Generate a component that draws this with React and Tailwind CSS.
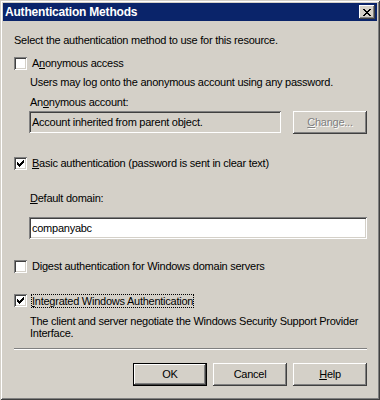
import React from "react";

const raised =
  "shadow-[inset_-1px_-1px_0_#404040,inset_1px_1px_0_#ffffff,inset_-2px_-2px_0_#808080,inset_2px_2px_0_#d4d0c8]";
const sunken =
  "shadow-[inset_1px_1px_0_#808080,inset_-1px_-1px_0_#ffffff,inset_2px_2px_0_#404040,inset_-2px_-2px_0_#d4d0c8]";

function CheckMark() {
  return (
    <svg width="7" height="7" viewBox="0 0 7 7" shapeRendering="crispEdges" className="block">
      <rect x="6" y="0" width="1" height="1" fill="#000" />
      <rect x="5" y="1" width="2" height="1" fill="#000" />
      <rect x="0" y="2" width="1" height="1" fill="#000" />
      <rect x="4" y="2" width="3" height="1" fill="#000" />
      <rect x="0" y="3" width="2" height="1" fill="#000" />
      <rect x="3" y="3" width="3" height="1" fill="#000" />
      <rect x="0" y="4" width="5" height="1" fill="#000" />
      <rect x="1" y="5" width="3" height="1" fill="#000" />
      <rect x="2" y="6" width="1" height="1" fill="#000" />
    </svg>
  );
}

function CloseGlyph() {
  const rows = [
    [[0, 2], [6, 2]],
    [[1, 2], [5, 2]],
    [[2, 4]],
    [[3, 2]],
    [[2, 4]],
    [[1, 2], [5, 2]],
    [[0, 2], [6, 2]],
  ];
  return (
    <svg width="8" height="7" viewBox="0 0 8 7" shapeRendering="crispEdges" className="block">
      {rows.map((r, y) =>
        r.map(([x, w], i) => <rect key={y + "-" + i} x={x} y={y} width={w} height="1" fill="#000" />)
      )}
    </svg>
  );
}

function Checkbox({ checked }) {
  return (
    <div className={`w-[13px] h-[13px] bg-white shrink-0 flex items-center justify-center ${sunken}`}>
      {checked ? <CheckMark /> : null}
    </div>
  );
}

function Button({ children, def, disabled, className = "" }) {
  const shadow = def
    ? "shadow-[inset_0_0_0_1px_#000000,inset_-2px_-2px_0_#404040,inset_2px_2px_0_#ffffff,inset_-3px_-3px_0_#808080,inset_3px_3px_0_#d4d0c8]"
    : raised;
  return (
    <div
      className={`w-[74px] h-[23px] bg-[#d4d0c8] flex items-center justify-center leading-[13px] ${shadow} ${
        disabled ? "text-[#808080] [text-shadow:1px_1px_0_#ffffff]" : "text-black"
      } ${className}`}
    >
      {children}
    </div>
  );
}

export default function App() {
  return (
    <div
      className="w-[380px] h-[400px] bg-[#d4d0c8] p-[3px] flex flex-col shadow-[inset_1px_1px_0_#d4d0c8,inset_-1px_-1px_0_#404040,inset_2px_2px_0_#ffffff,inset_-2px_-2px_0_#808080] text-[11px] tracking-[-0.25px] text-black"
      style={{ fontFamily: '"Liberation Sans", Arial, sans-serif' }}
    >
      {/* Title bar */}
      <div className="h-[18px] bg-[#0a246a] flex items-center justify-between pl-[2px] pr-[2px] shrink-0">
        <span className="text-white font-bold text-[12px] tracking-[-0.2px] leading-[14px]">
          Authentication Methods
        </span>
        <div className={`w-[16px] h-[14px] bg-[#d4d0c8] flex items-center justify-center ${raised}`}>
          <div className="pl-[0px] pt-[0px]">
            <CloseGlyph />
          </div>
        </div>
      </div>

      {/* Body */}
      <div className="flex flex-col pt-[13px] pl-[11px] pr-[10px] leading-[13px]">
        <div>Select the authentication method to use for this resource.</div>

        <div className="mt-[10px] flex items-center gap-[5px] h-[13px]">
          <Checkbox />
          <span>
            A<u>n</u>onymous access
          </span>
        </div>

        <div className="mt-[6px] ml-[16px]">Users may log onto the anonymous account using any password.</div>
        <div className="mt-[7px] ml-[16px]">
          An<u>o</u>nymous account:
        </div>

        <div className="mt-[2px] ml-[15px] flex items-start justify-between">
          <div className={`w-[252px] h-[22px] bg-[#d4d0c8] flex items-center pl-[3px] ${sunken}`}>
            Account inherited from parent object.
          </div>
          <Button disabled>
            <span>
              <u>C</u>hange...
            </span>
          </Button>
        </div>

        <div className="mt-[23px] flex items-center gap-[5px] h-[13px]">
          <Checkbox checked />
          <span>
            <u>B</u>asic authentication (password is sent in clear text)
          </span>
        </div>

        <div className="mt-[22px] ml-[16px]">
          <u>D</u>efault domain:
        </div>

        <div className={`mt-[12px] ml-[15px] h-[22px] bg-white flex items-center pl-[3px] ${sunken}`}>
          companyabc
        </div>

        <div className="mt-[21px] flex items-center gap-[5px] h-[13px]">
          <Checkbox />
          <span>
            Di<u>g</u>est authentication for Windows domain servers
          </span>
        </div>

        <div className="mt-[21px] flex items-center gap-[4px] h-[13px]">
          <Checkbox checked />
          <span className="border border-dotted border-black px-[0px] leading-[12px]">
            <u>I</u>ntegrated Windows Authentication
          </span>
        </div>

        <div className="mt-[8px] ml-[16px] leading-[12px]">
          The client and server negotiate the Windows Security Support Provider
          <br />
          Interface.
        </div>

        <div className="mt-[9px] h-[2px] border-t border-t-[#808080] border-b border-b-white" />

        <div className="mt-[13px] flex justify-end gap-[6px]">
          <Button def>OK</Button>
          <Button>Cancel</Button>
          <Button>
            <span>
              <u>H</u>elp
            </span>
          </Button>
        </div>
      </div>
    </div>
  );
}
